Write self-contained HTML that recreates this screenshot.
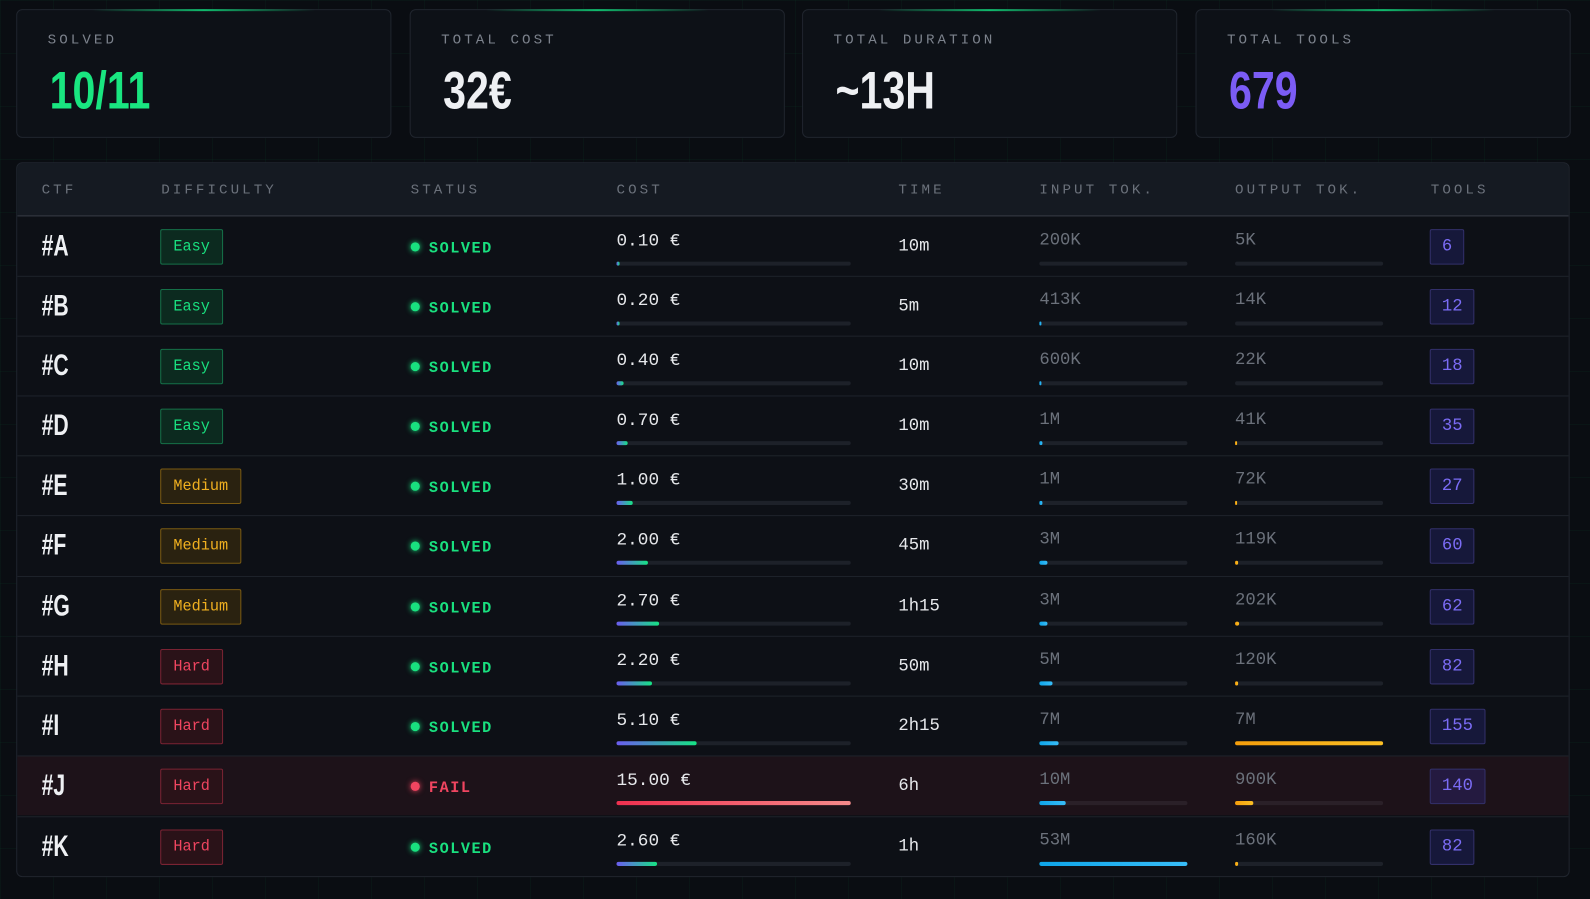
<!DOCTYPE html>
<html><head><meta charset="utf-8"><style>
*{box-sizing:border-box;margin:0;padding:0}
body{width:1590px;height:899px;background:#0a0d12;overflow:hidden;font-family:"Liberation Mono",monospace;position:relative;
background-image:linear-gradient(rgba(0,255,140,0.03) 1px,transparent 1px),linear-gradient(90deg,rgba(0,255,140,0.03) 1px,transparent 1px);background-size:53px 53px}
#w{position:absolute;left:0;top:0;width:1568px;height:887px;transform:scale(1.014);transform-origin:0 0}
.card{position:absolute;top:9px;width:370px;height:127px;border:1px solid #20252e;border-radius:6px;background:#0d1117}
.card:before{content:"";position:absolute;top:-1px;left:20%;width:60%;height:2px;background:linear-gradient(90deg,transparent,#10b96c,transparent)}
.card .l{position:absolute;left:30px;top:22px;font-size:14px;letter-spacing:3px;color:#7c828c}
.card .v{position:absolute;left:32px;top:50px;font-family:"Liberation Sans",sans-serif;font-weight:bold;font-size:52px;transform:scaleX(.78);transform-origin:left;letter-spacing:0}
.tbl{position:absolute;left:16px;top:160px;width:1532px;height:705px;border:1px solid #20252e;border-radius:6px;background:#0d1016;overflow:hidden}
.hd{position:absolute;left:0;top:0;width:100%;height:52px;background:#151a22;border-bottom:1px solid #2b3038}
.hd span{position:absolute;top:19px;font-size:14px;letter-spacing:3px;color:#6b717b}
.row{position:absolute;left:0;width:100%;height:59px;border-top:1px solid #1e232b}
.row>*{position:absolute}
.id{left:24px;top:13px;font-family:"Liberation Sans",sans-serif;font-weight:bold;font-size:29px;color:#eef0f3;transform:scaleX(.72);transform-origin:left}
.b{left:141px;top:12px;height:35px;border:1px solid;border-radius:2px;font-size:15px;line-height:33px;padding:0 12px}
.e{color:#19e07f;border-color:#157048;background:#0c2a1f}
.m{color:#f0b020;border-color:#7a5a12;background:#2a2210}
.h{color:#f04560;border-color:#7a2333;background:#2a1218}
.st{left:388px;top:23px;font-size:15px;font-weight:bold;letter-spacing:1.5px;color:#19e07f}
.st i{display:inline-block;width:9px;height:9px;border-radius:50%;background:#19e07f;box-shadow:0 0 6px #19e07f;margin-right:9px;vertical-align:1px}
.st.f{color:#f04560}.st.f i{background:#f04560;box-shadow:0 0 6px #f04560}
.c{left:591px;top:14px;font-size:17.5px;color:#e6e8eb}
.bar{top:44px;height:4px;border-radius:2px;background:#1d2129}
.bar b{display:block;height:4px;border-radius:2px}
.cb{left:591px;width:231px}.cb b{background:linear-gradient(90deg,#6b5cf0,#16e384)}
.ib{left:1008px;width:146px}.ib b{background:linear-gradient(90deg,#0ea5e9,#38bdf8)}
.ob{left:1201px;width:146px}.ob b{background:linear-gradient(90deg,#f59e0b,#fbbf24)}
.t{left:869px;top:20px;font-size:17px;color:#e6e8eb}
.n{top:14px;font-size:17px;color:#6b717b}
.tl{left:1393px;top:12px;height:35px;border:1px solid #33306a;background:#16183a;color:#7b6cf5;font-size:17px;line-height:33px;padding:0 11px;border-radius:2px}
.fr{background:#1d1219}
</style></head><body><div id="w">
<div class="card" style="left:16px"><div class="l">SOLVED</div><div class="v" style="color:#19e680">10/11</div></div>
<div class="card" style="left:404px"><div class="l">TOTAL COST</div><div class="v" style="color:#eef0f3">32€</div></div>
<div class="card" style="left:791px"><div class="l">TOTAL DURATION</div><div class="v" style="color:#eef0f3">~13H</div></div>
<div class="card" style="left:1179px"><div class="l">TOTAL TOOLS</div><div class="v" style="color:#7b5cf5">679</div></div>
<div class="tbl">
<div class="hd"><span style="left:24px">CTF</span><span style="left:142px">DIFFICULTY</span><span style="left:388px">STATUS</span><span style="left:591px">COST</span><span style="left:869px">TIME</span><span style="left:1008px">INPUT TOK.</span><span style="left:1201px">OUTPUT TOK.</span><span style="left:1394px">TOOLS</span></div>

<div class="row" style="top:52px"><div class="id">#A</div><div class="b e">Easy</div><div class="st"><i></i>SOLVED</div><div class="c">0.10 €</div><div class="bar cb"><b style="width:3px"></b></div><div class="t">10m</div><div class="n" style="left:1008px">200K</div><div class="bar ib"><b style="width:0"></b></div><div class="n" style="left:1201px">5K</div><div class="bar ob"><b style="width:0"></b></div><div class="tl">6</div></div>
<div class="row" style="top:111px"><div class="id">#B</div><div class="b e">Easy</div><div class="st"><i></i>SOLVED</div><div class="c">0.20 €</div><div class="bar cb"><b style="width:3px"></b></div><div class="t">5m</div><div class="n" style="left:1008px">413K</div><div class="bar ib"><b style="width:2px"></b></div><div class="n" style="left:1201px">14K</div><div class="bar ob"><b style="width:0"></b></div><div class="tl">12</div></div>
<div class="row" style="top:170px"><div class="id">#C</div><div class="b e">Easy</div><div class="st"><i></i>SOLVED</div><div class="c">0.40 €</div><div class="bar cb"><b style="width:7px"></b></div><div class="t">10m</div><div class="n" style="left:1008px">600K</div><div class="bar ib"><b style="width:2px"></b></div><div class="n" style="left:1201px">22K</div><div class="bar ob"><b style="width:0"></b></div><div class="tl">18</div></div>
<div class="row" style="top:229px"><div class="id">#D</div><div class="b e">Easy</div><div class="st"><i></i>SOLVED</div><div class="c">0.70 €</div><div class="bar cb"><b style="width:11px"></b></div><div class="t">10m</div><div class="n" style="left:1008px">1M</div><div class="bar ib"><b style="width:3px"></b></div><div class="n" style="left:1201px">41K</div><div class="bar ob"><b style="width:2px"></b></div><div class="tl">35</div></div>
<div class="row" style="top:288px"><div class="id">#E</div><div class="b m">Medium</div><div class="st"><i></i>SOLVED</div><div class="c">1.00 €</div><div class="bar cb"><b style="width:16px"></b></div><div class="t">30m</div><div class="n" style="left:1008px">1M</div><div class="bar ib"><b style="width:3px"></b></div><div class="n" style="left:1201px">72K</div><div class="bar ob"><b style="width:2px"></b></div><div class="tl">27</div></div>
<div class="row" style="top:347px"><div class="id">#F</div><div class="b m">Medium</div><div class="st"><i></i>SOLVED</div><div class="c">2.00 €</div><div class="bar cb"><b style="width:31px"></b></div><div class="t">45m</div><div class="n" style="left:1008px">3M</div><div class="bar ib"><b style="width:8px"></b></div><div class="n" style="left:1201px">119K</div><div class="bar ob"><b style="width:3px"></b></div><div class="tl">60</div></div>
<div class="row" style="top:407px"><div class="id">#G</div><div class="b m">Medium</div><div class="st"><i></i>SOLVED</div><div class="c">2.70 €</div><div class="bar cb"><b style="width:42px"></b></div><div class="t">1h15</div><div class="n" style="left:1008px">3M</div><div class="bar ib"><b style="width:8px"></b></div><div class="n" style="left:1201px">202K</div><div class="bar ob"><b style="width:4px"></b></div><div class="tl">62</div></div>
<div class="row" style="top:466px"><div class="id">#H</div><div class="b h">Hard</div><div class="st"><i></i>SOLVED</div><div class="c">2.20 €</div><div class="bar cb"><b style="width:35px"></b></div><div class="t">50m</div><div class="n" style="left:1008px">5M</div><div class="bar ib"><b style="width:13px"></b></div><div class="n" style="left:1201px">120K</div><div class="bar ob"><b style="width:3px"></b></div><div class="tl">82</div></div>
<div class="row" style="top:525px"><div class="id">#I</div><div class="b h">Hard</div><div class="st"><i></i>SOLVED</div><div class="c">5.10 €</div><div class="bar cb"><b style="width:79px"></b></div><div class="t">2h15</div><div class="n" style="left:1008px">7M</div><div class="bar ib"><b style="width:19px"></b></div><div class="n" style="left:1201px">7M</div><div class="bar ob"><b style="width:146px"></b></div><div class="tl">155</div></div>
<div class="row fr" style="top:584px"><div class="id">#J</div><div class="b h">Hard</div><div class="st f"><i></i>FAIL</div><div class="c">15.00 €</div><div class="bar cb" style="background:#2a2028"><b style="width:231px;background:linear-gradient(90deg,#f0304f,#f58a8a)"></b></div><div class="t">6h</div><div class="n" style="left:1008px">10M</div><div class="bar ib" style="background:#2a2028"><b style="width:26px"></b></div><div class="n" style="left:1201px">900K</div><div class="bar ob" style="background:#2a2028"><b style="width:18px"></b></div><div class="tl" style="background:#241a40">140</div></div>
<div class="row" style="top:644px"><div class="id">#K</div><div class="b h">Hard</div><div class="st"><i></i>SOLVED</div><div class="c">2.60 €</div><div class="bar cb"><b style="width:40px"></b></div><div class="t">1h</div><div class="n" style="left:1008px">53M</div><div class="bar ib"><b style="width:146px"></b></div><div class="n" style="left:1201px">160K</div><div class="bar ob"><b style="width:3px"></b></div><div class="tl">82</div></div>
</div>
</div></body></html>
